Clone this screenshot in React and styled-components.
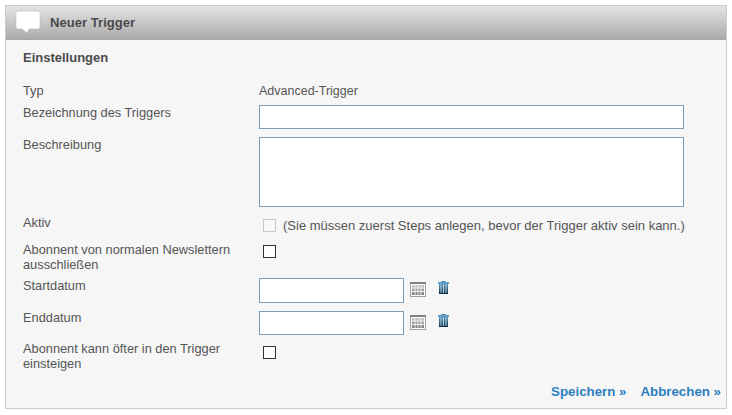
import React from "react";
import styled, { createGlobalStyle } from "styled-components";

const Global = createGlobalStyle`
  html, body { margin: 0; padding: 0; background: #fff; }
  body { font-family: "Liberation Sans", Arial, sans-serif; font-size: 13px; color: #555; }
`;
const Panel = styled.div`
  width: 720px; height: 402px; margin: 5px 0 0 5px;
  border: 1px solid #ccc; background: #f6f6f6; display: flex; flex-direction: column;
`;
const Header = styled.div`
  height: 34px; flex: none; display: flex; align-items: center; gap: 9px; padding: 0 0 2px 9px; box-sizing: border-box;
  background: linear-gradient(#e4e4e4, #a9a9a9);
`;
const HeaderTitle = styled.h1`
  margin: 0; font-size: 13px; font-weight: bold; color: #4a4a4a; letter-spacing: 0.05px;
`;
const Body = styled.div`
  flex: 1; display: flex; flex-direction: column; padding: 0 5px 0 17px;
`;
const SectionTitle = styled.h2`
  margin: 10px 0 0; height: 15px; line-height: 15px; font-size: 13px; font-weight: bold; color: #4a4a4a;
`;
const Form = styled.div`
  display: flex; flex-direction: column; margin-top: 16px;
`;
const Row = styled.div`
  display: grid; grid-template-columns: 236px 1fr; min-height: ${p => p.$h}px;
`;
const Label = styled.div`
  font-size: 12.8px; line-height: 15px; padding-top: ${p => p.$top ?? 0}px;
`;
const Value = styled.div`
  display: flex; align-items: flex-start; padding-top: ${p => p.$top ?? 0}px;
`;
const Plain = styled.span`
  font-size: 12.5px; line-height: 15px; padding-top: 3px;
`;
const TextInput = styled.input`
  box-sizing: border-box; display: block; width: ${p => p.$w}px; height: ${p => p.$h}px; margin: 0;
  padding: 2px; background: #fff; border: 1px solid #7c9cb8; border-radius: 0; outline: none;
`;
const TextArea = styled.textarea`
  box-sizing: border-box; display: block; width: 425px; height: 70px; margin: 0; padding: 2px;
  background: #fff; border: 1px solid #7c9cb8; resize: none; outline: none;
`;
const Check = styled.span`
  box-sizing: border-box; display: block; flex: none; width: 13px; height: 13px; background: ${p => p.$disabled ? "#f8f8f8" : "#fff"};
  border: 1px solid ${p => p.$disabled ? "#c8c8c8" : "#333"}; margin: ${p => p.$margin};
`;
const Hint = styled.span`
  font-size: 13px; line-height: 15px; margin: 2px 0 0 7px;
`;
const IconBox = styled.span`
  display: block; flex: none; margin: ${p => p.$margin}; line-height: 0;
`;
const Footer = styled.div`
  display: flex; justify-content: flex-end; gap: 14px; margin-top: 13px;
`;
const ActionLink = styled.a`
  font-size: 13.3px; line-height: 15px; font-weight: bold; color: #2f7fc1; text-decoration: none;
`;

const Bubble = () => (
  <svg width="26" height="24" viewBox="0 0 26 24">
    <path d="M3 1H23Q25 1 25 3V17Q25 19 23 19H14L12 23L7 19H3Q1 19 1 17V3Q1 1 3 1Z" fill="#fff" stroke="#bdbdbd" strokeWidth="0.6" />
  </svg>
);
const CalendarIcon = () => (
  <svg width="16" height="15" viewBox="0 0 16 15">
    <defs>
      <linearGradient id="cal" x1="0" y1="0" x2="0" y2="1">
        <stop offset="0" stopColor="#c8c8c8" /><stop offset="1" stopColor="#777" />
      </linearGradient>
    </defs>
    <rect x="0.5" y="0.5" width="15" height="14" fill="#fdfdfd" stroke="#a0a0a0" />
    <rect x="0" y="0" width="16" height="2" fill="#808080" />
    <rect x="2" y="3" width="12" height="10" fill="url(#cal)" />
    <path d="M5 3V13M8 3V13M11 3V13M2 6H14M2 9.5H14" stroke="#f0f0f0" strokeWidth="1" />
  </svg>
);
const TrashIcon = ({ id }) => (
  <svg width="11" height="13" viewBox="0 0 11 13">
    <defs>
      <linearGradient id={id} x1="0" y1="0" x2="0" y2="1">
        <stop offset="0" stopColor="#5b9ac6" /><stop offset="1" stopColor="#062a45" />
      </linearGradient>
    </defs>
    <path d="M3.5 1.5V0.5H7.5V1.5" fill="none" stroke="#4d87b0" />
    <rect x="0" y="1" width="11" height="2" fill="#5f9cc6" />
    <rect x="1" y="3" width="9" height="10" fill={`url(#${id})`} />
    <path d="M3 3.5V12M5.5 3.5V12M8 3.5V12" stroke="#e6eef4" strokeWidth="0.8" />
  </svg>
);

export default function App() {
  return (
    <>
      <Global />
      <Panel>
        <Header>
          <Bubble />
          <HeaderTitle>Neuer Trigger</HeaderTitle>
        </Header>
        <Body>
          <SectionTitle>Einstellungen</SectionTitle>
          <Form>
            <Row $h={22}>
              <Label $top={2}>Typ</Label>
              <Value><Plain>Advanced-Trigger</Plain></Value>
            </Row>
            <Row $h={34}>
              <Label $top={2}>Bezeichnung des Triggers</Label>
              <Value $top={2}><TextInput $w={425} $h={24} /></Value>
            </Row>
            <Row $h={77}>
              <Label>Beschreibung</Label>
              <Value><TextArea /></Value>
            </Row>
            <Row $h={28}>
              <Label $top={1}>Aktiv</Label>
              <Value $top={2}>
                <Check $disabled $margin="3px 0 0 4px" />
                <Hint>(Sie müssen zuerst Steps anlegen, bevor der Trigger aktiv sein kann.)</Hint>
              </Value>
            </Row>
            <Row $h={36}>
              <Label>Abonnent von normalen Newslettern<br />ausschließen</Label>
              <Value><Check $margin="3px 0 0 4px" /></Value>
            </Row>
            <Row $h={32}>
              <Label>Startdatum</Label>
              <Value>
                <TextInput $w={145} $h={25} />
                <IconBox $margin="4px 0 0 6px"><CalendarIcon /></IconBox>
                <IconBox $margin="3px 0 0 12px"><TrashIcon id="t1" /></IconBox>
              </Value>
            </Row>
            <Row $h={31}>
              <Label>Enddatum</Label>
              <Value $top={1}>
                <TextInput $w={145} $h={24} />
                <IconBox $margin="4px 0 0 6px"><CalendarIcon /></IconBox>
                <IconBox $margin="3px 0 0 12px"><TrashIcon id="t2" /></IconBox>
              </Value>
            </Row>
            <Row $h={30}>
              <Label>Abonnent kann öfter in den Trigger<br />einsteigen</Label>
              <Value><Check $margin="5px 0 0 4px" /></Value>
            </Row>
          </Form>
          <Footer>
            <ActionLink href="#">Speichern »</ActionLink>
            <ActionLink href="#">Abbrechen »</ActionLink>
          </Footer>
        </Body>
      </Panel>
    </>
  );
}
